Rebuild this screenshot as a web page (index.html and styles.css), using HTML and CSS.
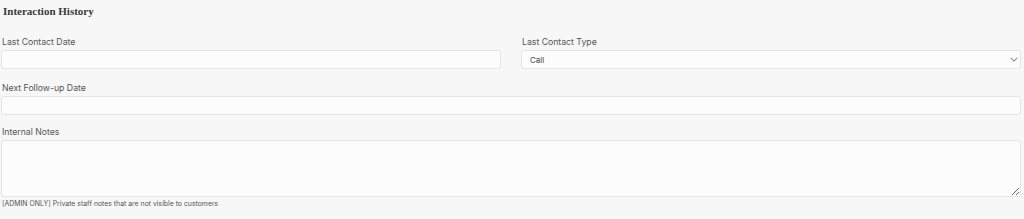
FILE: index.html
```html
<!DOCTYPE html>
<html lang="en">
<head>
    <meta charset="UTF-8">
    <title>Interaction History</title>
    <link rel="stylesheet" href="styles.css">
</head>
<body>
    <section class="panel">
        <h3 class="panel-title">Interaction History</h3>
        <div class="row">
            <div class="field">
                <label for="lastDate">Last Contact Date</label>
                <input type="text" id="lastDate">
            </div>
            <div class="field">
                <label for="lastType">Last Contact Type</label>
                <div class="select-wrap">
                    <select id="lastType">
                        <option>Call</option>
                        <option>Email</option>
                        <option>Meeting</option>
                    </select>
                    <svg class="chevron" width="10" height="6" viewBox="0 0 10 6"><path d="M1 1l4 4 4-4" fill="none" stroke="#8a8a8a" stroke-width="1.3"/></svg>
                </div>
            </div>
        </div>
        <div class="field">
            <label for="nextDate">Next Follow-up Date</label>
            <input type="text" id="nextDate">
        </div>
        <div class="field">
            <label for="notes">Internal Notes</label>
            <textarea id="notes"></textarea>
            <p class="help">[ADMIN ONLY] Private staff notes that are not visible to customers</p>
        </div>
    </section>
</body>
</html>
```

FILE: styles.css
```css
* {
    margin: 0;
    padding: 0;
    box-sizing: border-box;
}

body {
    background-color: #f7f7f7;
    font-family: Inter, "Liberation Sans", sans-serif;
}

.panel {
    padding: 4px 3px 0 1px;
}

.panel-title {
    font-family: "Liberation Serif", serif;
    font-size: 11px;
    font-weight: bold;
    color: #3a3a3a;
    line-height: 14px;
    padding-left: 2px;
    margin-bottom: 17px;
}

.row {
    display: grid;
    grid-template-columns: 1fr 1fr;
    gap: 20px;
    margin-bottom: 12px;
}

.row .field {
    margin-bottom: 0;
}

.field {
    margin-bottom: 10px;
}

.field label {
    display: block;
    font-size: 8.7px;
    line-height: 14px;
    color: #555;
    padding-left: 1px;
    margin-bottom: 1px;
}

.field input,
.field select,
.field textarea {
    display: block;
    width: 100%;
    height: 19px;
    background-color: #fcfcfc;
    border: 1px solid #e4e4e4;
    border-radius: 3px;
    font-family: inherit;
    font-size: 8px;
    color: #444;
    padding: 0 8px;
    outline: none;
}

.select-wrap {
    position: relative;
}

.field select {
    appearance: none;
    -webkit-appearance: none;
}

.chevron {
    position: absolute;
    right: 3px;
    top: 7px;
    width: 8px;
    height: 5px;
}

.field textarea {
    height: 57px;
    resize: vertical;
    padding: 4px 8px;
}

.help {
    font-size: 6.9px;
    line-height: 10px;
    color: #555;
    padding-left: 1px;
    margin-top: 2px;
}
```
